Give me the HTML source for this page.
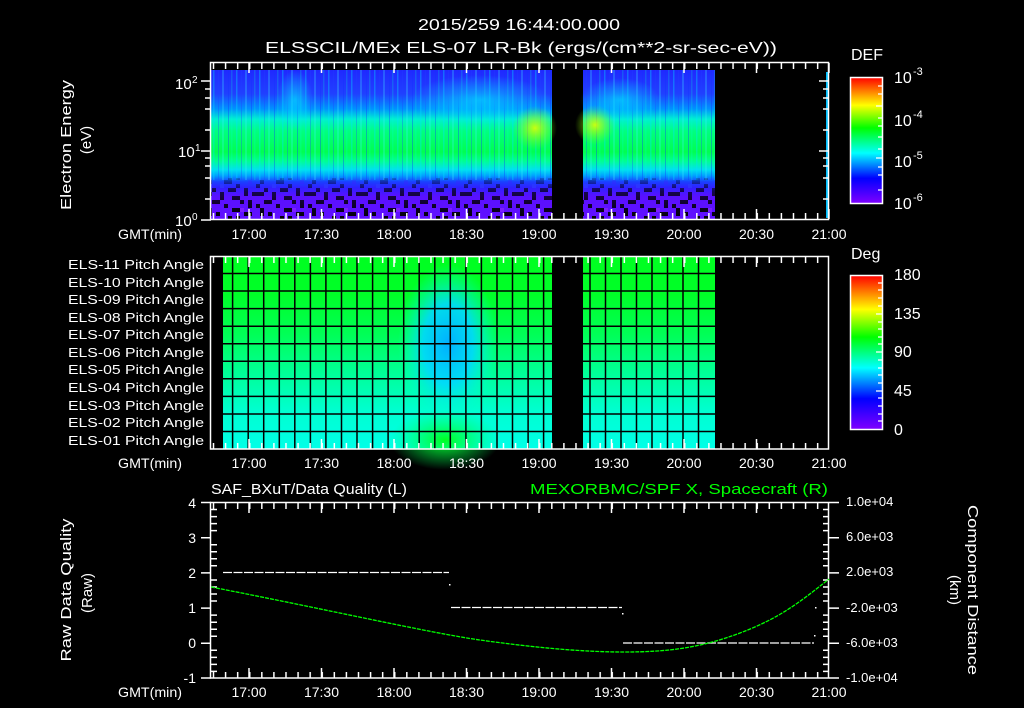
<!DOCTYPE html>
<html><head><meta charset="utf-8"><style>
html,body{margin:0;padding:0;background:#000;}
svg{display:block;}
text{font-family:"Liberation Sans",sans-serif;fill:#fff;}
</style></head><body>
<svg width="1024" height="708" viewBox="0 0 1024 708" xmlns="http://www.w3.org/2000/svg">
<defs>
<linearGradient id="spec" x1="0" y1="0" x2="0" y2="1">
 <stop offset="0" stop-color="#2028ff"/>
 <stop offset="0.16" stop-color="#2040ff"/>
 <stop offset="0.26" stop-color="#0090ff"/>
 <stop offset="0.33" stop-color="#00f0d0"/>
 <stop offset="0.41" stop-color="#00ff80"/>
 <stop offset="0.55" stop-color="#00ff50"/>
 <stop offset="0.61" stop-color="#00ff90"/>
 <stop offset="0.67" stop-color="#00e0f0"/>
 <stop offset="0.71" stop-color="#00a0ff"/>
 <stop offset="0.75" stop-color="#1a40ff"/>
 <stop offset="0.79" stop-color="#3020ff"/>
 <stop offset="0.85" stop-color="#5a10ff"/>
 <stop offset="1" stop-color="#6010ff"/>
</linearGradient>
<pattern id="streaks" x="211" y="0" width="23" height="10" patternUnits="userSpaceOnUse">
 <rect x="2" y="0" width="1.5" height="10" fill="#00e0ff" opacity="0.35"/>
 <rect x="7" y="0" width="1" height="10" fill="#2040ff" opacity="0.3"/>
 <rect x="11" y="0" width="2" height="10" fill="#40f0ff" opacity="0.25"/>
 <rect x="17" y="0" width="1" height="10" fill="#1030ff" opacity="0.35"/>
 <rect x="20" y="0" width="1.5" height="10" fill="#00ffd0" opacity="0.2"/>
</pattern>
<radialGradient id="yel" cx="0.5" cy="0.5" r="0.5">
 <stop offset="0" stop-color="#e0ff00" stop-opacity="0.9"/>
 <stop offset="1" stop-color="#80ff00" stop-opacity="0"/>
</radialGradient>
<radialGradient id="cyanblob" cx="0.5" cy="0.5" r="0.5">
 <stop offset="0" stop-color="#00e0ff" stop-opacity="0.7"/>
 <stop offset="1" stop-color="#00e0ff" stop-opacity="0"/>
</radialGradient>
<pattern id="noise" x="0" y="180" width="52" height="40" patternUnits="userSpaceOnUse">
 <rect x="0" y="0" width="4" height="4" fill="#000"/>
 <rect x="16" y="0" width="8" height="4" fill="#000"/>
 <rect x="40" y="0" width="4" height="4" fill="#4020ff"/>
 <rect x="28" y="4" width="4" height="4" fill="#000"/>
 <rect x="48" y="4" width="4" height="4" fill="#000"/>
 <rect x="4" y="8" width="4" height="4" fill="#000"/>
 <rect x="20" y="8" width="8" height="4" fill="#000"/>
 <rect x="36" y="8" width="4" height="8" fill="#000"/>
 <rect x="44" y="12" width="8" height="4" fill="#000"/>
 <rect x="0" y="12" width="4" height="4" fill="#000"/>
 <rect x="12" y="12" width="4" height="8" fill="#000"/>
 <rect x="24" y="16" width="8" height="4" fill="#000"/>
 <rect x="4" y="20" width="8" height="4" fill="#000"/>
 <rect x="32" y="20" width="4" height="4" fill="#000"/>
 <rect x="40" y="20" width="4" height="8" fill="#000"/>
 <rect x="16" y="24" width="4" height="4" fill="#000"/>
 <rect x="48" y="24" width="4" height="4" fill="#000"/>
 <rect x="0" y="28" width="4" height="8" fill="#000"/>
 <rect x="24" y="28" width="8" height="4" fill="#000"/>
 <rect x="8" y="32" width="4" height="4" fill="#000"/>
 <rect x="36" y="32" width="8" height="4" fill="#000"/>
 <rect x="20" y="36" width="4" height="4" fill="#000"/>
 <rect x="28" y="36" width="4" height="4" fill="#000"/>
 <rect x="12" y="4" width="4" height="4" fill="#3040ff"/>
 <rect x="32" y="28" width="4" height="4" fill="#8020ff"/>
</pattern>
<linearGradient id="noisefade" x1="0" y1="0" x2="0" y2="1">
 <stop offset="0" stop-color="#fff" stop-opacity="0.1"/>
 <stop offset="0.35" stop-color="#fff" stop-opacity="0.7"/>
 <stop offset="1" stop-color="#fff" stop-opacity="1"/>
</linearGradient>
<mask id="nm"><rect x="200" y="176" width="640" height="44" fill="url(#noisefade)"/></mask>
<linearGradient id="rainbow" x1="0" y1="1" x2="0" y2="0">
 <stop offset="0" stop-color="#8000ff"/>
 <stop offset="0.2" stop-color="#0000ff"/>
 <stop offset="0.4" stop-color="#00ffff"/>
 <stop offset="0.6" stop-color="#00ff00"/>
 <stop offset="0.78" stop-color="#ffff00"/>
 <stop offset="1" stop-color="#ff0000"/>
</linearGradient>
<linearGradient id="rows" x1="0" y1="0" x2="0" y2="1">
 <stop offset="0" stop-color="#00ff20"/>
 <stop offset="0.2" stop-color="#00ff28"/>
 <stop offset="0.4" stop-color="#00ff55"/>
 <stop offset="0.6" stop-color="#00ff95"/>
 <stop offset="0.8" stop-color="#00ffd0"/>
 <stop offset="1" stop-color="#00ffe8"/>
</linearGradient>
<radialGradient id="blueblob" cx="0.5" cy="0.5" r="0.5">
 <stop offset="0" stop-color="#00b0ff"/>
 <stop offset="0.5" stop-color="#00d8ff" stop-opacity="0.9"/>
 <stop offset="1" stop-color="#00ffd0" stop-opacity="0"/>
</radialGradient>
<radialGradient id="greenblob" cx="0.5" cy="0.5" r="0.5">
 <stop offset="0" stop-color="#00ff20"/>
 <stop offset="1" stop-color="#00ff60" stop-opacity="0"/>
</radialGradient>
<pattern id="minX" x="212.75" y="0" width="12.083" height="10" patternUnits="userSpaceOnUse">
 <rect x="0" y="0" width="1.5" height="10" fill="#fff"/>
</pattern>
</defs>

<text x="519" y="30" font-size="16" text-anchor="middle" textLength="202" lengthAdjust="spacingAndGlyphs">2015/259 16:44:00.000</text>
<text x="521" y="53" font-size="16" text-anchor="middle" textLength="512" lengthAdjust="spacingAndGlyphs">ELSSCIL/MEx ELS-07 LR-Bk  (ergs/(cm**2-sr-sec-eV))</text>

<!-- ===== Panel 1 ===== -->
<rect x="211" y="70" width="341" height="149" fill="url(#spec)"/>
<rect x="583" y="70" width="132" height="149" fill="url(#spec)"/>
<rect x="211" y="70" width="341" height="110" fill="url(#streaks)"/>
<rect x="583" y="70" width="132" height="110" fill="url(#streaks)"/>
<ellipse cx="535" cy="128" rx="22" ry="22" fill="url(#yel)"/>
<ellipse cx="595" cy="125" rx="20" ry="20" fill="url(#yel)"/>
<ellipse cx="480" cy="100" rx="70" ry="25" fill="url(#cyanblob)"/>
<ellipse cx="295" cy="100" rx="18" ry="30" fill="url(#cyanblob)"/>
<ellipse cx="620" cy="100" rx="40" ry="22" fill="url(#cyanblob)"/>
<g mask="url(#nm)">
<rect x="211" y="178" width="341" height="41" fill="url(#noise)"/>
<rect x="583" y="178" width="132" height="41" fill="url(#noise)"/>
</g>
<rect x="826" y="72" width="2" height="146" fill="#00c0ff"/>
<rect x="210.5" y="62.5" width="618" height="157" fill="none" stroke="#fff" stroke-width="1.5"/>
<rect x="211" y="63" width="618" height="6" fill="url(#minX)"/>
<rect x="211" y="213" width="618" height="6" fill="url(#minX)"/>
<g stroke="#fff" stroke-width="1.5">
 <path d="M249 63v10M321.5 63v10M394 63v10M466.5 63v10M539 63v10M611.5 63v10M684 63v10M756.5 63v10M829 63v10"/>
 <path d="M249 219v-10M321.5 219v-10M394 219v-10M466.5 219v-10M539 219v-10M611.5 219v-10M684 219v-10M756.5 219v-10M829 219v-10"/>
 <path d="M201 81h10M201 151h10M201 220h10"/>
 <path d="M205 89h6M205 98h6M205 109h6M205 130h6M205 158h6M205 166h6M205 178h6M205 199h6"/>
 <path d="M829 81h-10M829 151h-10"/>
 <path d="M829 89h-6M829 98h-6M829 109h-6M829 130h-6M829 158h-6M829 166h-6M829 178h-6M829 199h-6"/>
</g>
<text x="175" y="89" font-size="15">10</text><text x="192" y="83" font-size="10">2</text>
<text x="178" y="157" font-size="15">10</text><text x="195" y="151" font-size="10">1</text>
<text x="175" y="226" font-size="15">10</text><text x="192" y="220" font-size="10">0</text>
<text transform="translate(71,145) rotate(-90)" font-size="15" text-anchor="middle" textLength="130" lengthAdjust="spacingAndGlyphs">Electron Energy</text>
<text transform="translate(91,140) rotate(-90)" font-size="15" text-anchor="middle">(eV)</text>

<g font-size="14">
<text x="118" y="239" textLength="64" lengthAdjust="spacingAndGlyphs">GMT(min)</text>
<text x="249" y="239" text-anchor="middle">17:00</text>
<text x="321.5" y="239" text-anchor="middle">17:30</text>
<text x="394" y="239" text-anchor="middle">18:00</text>
<text x="466.5" y="239" text-anchor="middle">18:30</text>
<text x="539" y="239" text-anchor="middle">19:00</text>
<text x="611.5" y="239" text-anchor="middle">19:30</text>
<text x="684" y="239" text-anchor="middle">20:00</text>
<text x="756.5" y="239" text-anchor="middle">20:30</text>
<text x="829" y="239" text-anchor="middle">21:00</text>
</g>

<text x="851" y="60" font-size="16">DEF</text>
<rect x="850.5" y="77.5" width="32" height="126" fill="url(#rainbow)" stroke="#fff" stroke-width="1.5"/>
<g stroke="#fff" stroke-width="1.2">
<path d="M882 86h-4M882 94h-4M882 106h-6M882 118h-4M882 126h-4M882 137h-4M882 149h-4M882 158h-6M882 167h-4M882 175h-4M882 190h-4"/>
</g>
<g font-size="16">
<text x="894" y="83">10</text><text x="913" y="75" font-size="11">-3</text>
<text x="894" y="126">10</text><text x="913" y="118" font-size="11">-4</text>
<text x="894" y="167">10</text><text x="913" y="159" font-size="11">-5</text>
<text x="894" y="209">10</text><text x="913" y="201" font-size="11">-6</text>
</g>

<!-- ===== Panel 2 ===== -->
<rect x="223" y="256" width="329" height="193" fill="url(#rows)"/>
<rect x="583" y="256" width="132" height="193" fill="url(#rows)"/>
<ellipse cx="448" cy="344" rx="50" ry="80" fill="url(#blueblob)"/>
<ellipse cx="445" cy="440" rx="55" ry="30" fill="url(#greenblob)"/>
<g stroke="#000" stroke-width="1.5">
<path d="M223 273.5H552M223 291H552M223 308.6H552M223 326.2H552M223 343.7H552M223 361.3H552M223 378.8H552M223 396.4H552M223 414H552M223 431.5H552"/>
<path d="M583 273.5H715M583 291H715M583 308.6H715M583 326.2H715M583 343.7H715M583 361.3H715M583 378.8H715M583 396.4H715M583 414H715M583 431.5H715"/>
<path d="M232.6 256V449M248.2 256V449M263.7 256V449M279.3 256V449M294.8 256V449M310.4 256V449M325.9 256V449M341.5 256V449M357 256V449M372.6 256V449M388.1 256V449M403.7 256V449M419.2 256V449M434.8 256V449M450.3 256V449M465.9 256V449M481.4 256V449M497 256V449M512.5 256V449M528.1 256V449M543.6 256V449"/>
<path d="M590 256V449M605.5 256V449M621 256V449M636.5 256V449M652 256V449M667.5 256V449M683 256V449M698.5 256V449"/>
</g>
<rect x="210.5" y="256.5" width="618" height="192.5" fill="none" stroke="#fff" stroke-width="1.5"/>
<rect x="211" y="257" width="618" height="6" fill="url(#minX)"/>
<rect x="211" y="443" width="618" height="6" fill="url(#minX)"/>
<g stroke="#fff" stroke-width="1.5">
 <path d="M249 257v10M321.5 257v10M394 257v10M466.5 257v10M539 257v10M611.5 257v10M684 257v10M756.5 257v10"/>
 <path d="M249 449v-10M321.5 449v-10M394 449v-10M466.5 449v-10M539 449v-10M611.5 449v-10M684 449v-10M756.5 449v-10"/>
</g>
<g font-size="13" text-anchor="end">
<text x="204" y="269" textLength="136" lengthAdjust="spacingAndGlyphs">ELS-11 Pitch Angle</text>
<text x="204" y="287" textLength="136" lengthAdjust="spacingAndGlyphs">ELS-10 Pitch Angle</text>
<text x="204" y="304" textLength="136" lengthAdjust="spacingAndGlyphs">ELS-09 Pitch Angle</text>
<text x="204" y="322" textLength="136" lengthAdjust="spacingAndGlyphs">ELS-08 Pitch Angle</text>
<text x="204" y="339" textLength="136" lengthAdjust="spacingAndGlyphs">ELS-07 Pitch Angle</text>
<text x="204" y="357" textLength="136" lengthAdjust="spacingAndGlyphs">ELS-06 Pitch Angle</text>
<text x="204" y="374" textLength="136" lengthAdjust="spacingAndGlyphs">ELS-05 Pitch Angle</text>
<text x="204" y="392" textLength="136" lengthAdjust="spacingAndGlyphs">ELS-04 Pitch Angle</text>
<text x="204" y="410" textLength="136" lengthAdjust="spacingAndGlyphs">ELS-03 Pitch Angle</text>
<text x="204" y="427" textLength="136" lengthAdjust="spacingAndGlyphs">ELS-02 Pitch Angle</text>
<text x="204" y="445" textLength="136" lengthAdjust="spacingAndGlyphs">ELS-01 Pitch Angle</text>
</g>
<g font-size="14">
<text x="118" y="468" textLength="64" lengthAdjust="spacingAndGlyphs">GMT(min)</text>
<text x="249" y="468" text-anchor="middle">17:00</text>
<text x="321.5" y="468" text-anchor="middle">17:30</text>
<text x="394" y="468" text-anchor="middle">18:00</text>
<text x="466.5" y="468" text-anchor="middle">18:30</text>
<text x="539" y="468" text-anchor="middle">19:00</text>
<text x="611.5" y="468" text-anchor="middle">19:30</text>
<text x="684" y="468" text-anchor="middle">20:00</text>
<text x="756.5" y="468" text-anchor="middle">20:30</text>
<text x="829" y="468" text-anchor="middle">21:00</text>
</g>

<text x="851" y="259" font-size="16">Deg</text>
<rect x="850.5" y="275.5" width="32" height="154" fill="url(#rainbow)" stroke="#fff" stroke-width="1.5"/>
<g stroke="#fff" stroke-width="1.2">
<path d="M882 283h-4M882 290h-4M882 298h-4M882 306h-4M882 314h-6M882 322h-4M882 329h-4M882 337h-4M882 344h-4M882 352h-6M882 360h-4M882 368h-4M882 375h-4M882 383h-4M882 391h-6M882 398h-4M882 406h-4M882 414h-4M882 421h-4"/>
</g>
<g font-size="16">
<text x="894" y="280">180</text>
<text x="894" y="319">135</text>
<text x="894" y="357">90</text>
<text x="894" y="396">45</text>
<text x="894" y="435">0</text>
</g>

<!-- ===== Panel 3 ===== -->
<text x="211" y="494" font-size="15" textLength="196" lengthAdjust="spacingAndGlyphs">SAF_BXuT/Data Quality (L)</text>
<text x="530" y="494" font-size="15" style="fill:#00ff00" textLength="298" lengthAdjust="spacingAndGlyphs">MEXORBMC/SPF X, Spacecraft (R)</text>
<rect x="210.5" y="502.5" width="618" height="175.5" fill="none" stroke="#fff" stroke-width="1.5"/>
<rect x="211" y="503" width="618" height="6" fill="url(#minX)"/>
<rect x="211" y="672" width="618" height="6" fill="url(#minX)"/>
<g stroke="#fff" stroke-width="1.5">
 <path d="M249 503v10M321.5 503v10M394 503v10M466.5 503v10M539 503v10M611.5 503v10M684 503v10M756.5 503v10"/>
 <path d="M249 678v-10M321.5 678v-10M394 678v-10M466.5 678v-10M539 678v-10M611.5 678v-10M684 678v-10M756.5 678v-10"/>
 <path d="M201 502.5h10M201 537.7h10M201 572.9h10M201 608.1h10M201 643.3h10M201 678h10"/>
 <path d="M211 509.5h6M211 516.6h6M211 523.6h6M211 530.6h6M211 544.7h6M211 551.8h6M211 558.8h6M211 565.8h6M211 580h6M211 587h6M211 594h6M211 601h6M211 615.1h6M211 622.2h6M211 629.2h6M211 636.2h6M211 650.3h6M211 657.4h6M211 664.4h6M211 671.4h6"/>
 <path d="M839 502.5h-10M839 537.7h-10M839 572.9h-10M839 608.1h-10M839 643.3h-10M839 678h-10"/>
 <path d="M829 509.5h-6M829 516.6h-6M829 523.6h-6M829 530.6h-6M829 544.7h-6M829 551.8h-6M829 558.8h-6M829 565.8h-6M829 580h-6M829 587h-6M829 594h-6M829 601h-6M829 615.1h-6M829 622.2h-6M829 629.2h-6M829 636.2h-6M829 650.3h-6M829 657.4h-6M829 664.4h-6M829 671.4h-6"/>
</g>
<g stroke="#fff" stroke-width="1.3" stroke-dasharray="9 1.5">
<path d="M223 572.5H449"/>
<path d="M451 607.5H622"/>
<path d="M623 643H814"/>
</g>
<g fill="#fff"><rect x="449" y="584" width="1.5" height="1.5"/><rect x="622" y="613" width="1.5" height="1.5"/><rect x="815" y="607" width="1.5" height="1.5"/><rect x="814" y="635" width="1.5" height="1.5"/></g>
<path d="M211 587 C320 608 430 633 480 640 S580 652 624 652 S700 648 740 633 S800 602 829 579" fill="none" stroke="#00ff00" stroke-width="1.3" stroke-dasharray="4 1"/>

<g font-size="14">
<text x="196" y="508" text-anchor="end">4</text>
<text x="196" y="543" text-anchor="end">3</text>
<text x="196" y="578" text-anchor="end">2</text>
<text x="196" y="613" text-anchor="end">1</text>
<text x="196" y="648" text-anchor="end">0</text>
<text x="196" y="683" text-anchor="end">-1</text>
</g>
<g font-size="13">
<text x="846" y="506">1.0e+04</text>
<text x="846" y="541">6.0e+03</text>
<text x="846" y="576">2.0e+03</text>
<text x="846" y="612">-2.0e+03</text>
<text x="846" y="647">-6.0e+03</text>
<text x="846" y="682">-1.0e+04</text>
</g>
<text transform="translate(71,590) rotate(-90)" font-size="15" text-anchor="middle" textLength="143" lengthAdjust="spacingAndGlyphs">Raw Data Quality</text>
<text transform="translate(92,593) rotate(-90)" font-size="15" text-anchor="middle">(Raw)</text>
<text transform="translate(968,590) rotate(90)" font-size="15" text-anchor="middle" textLength="170" lengthAdjust="spacingAndGlyphs">Component Distance</text>
<text transform="translate(950,590) rotate(90)" font-size="15" text-anchor="middle">(km)</text>

<g font-size="14">
<text x="118" y="697" textLength="64" lengthAdjust="spacingAndGlyphs">GMT(min)</text>
<text x="249" y="697" text-anchor="middle">17:00</text>
<text x="321.5" y="697" text-anchor="middle">17:30</text>
<text x="394" y="697" text-anchor="middle">18:00</text>
<text x="466.5" y="697" text-anchor="middle">18:30</text>
<text x="539" y="697" text-anchor="middle">19:00</text>
<text x="611.5" y="697" text-anchor="middle">19:30</text>
<text x="684" y="697" text-anchor="middle">20:00</text>
<text x="756.5" y="697" text-anchor="middle">20:30</text>
<text x="829" y="697" text-anchor="middle">21:00</text>
</g>
</svg>
</body></html>
